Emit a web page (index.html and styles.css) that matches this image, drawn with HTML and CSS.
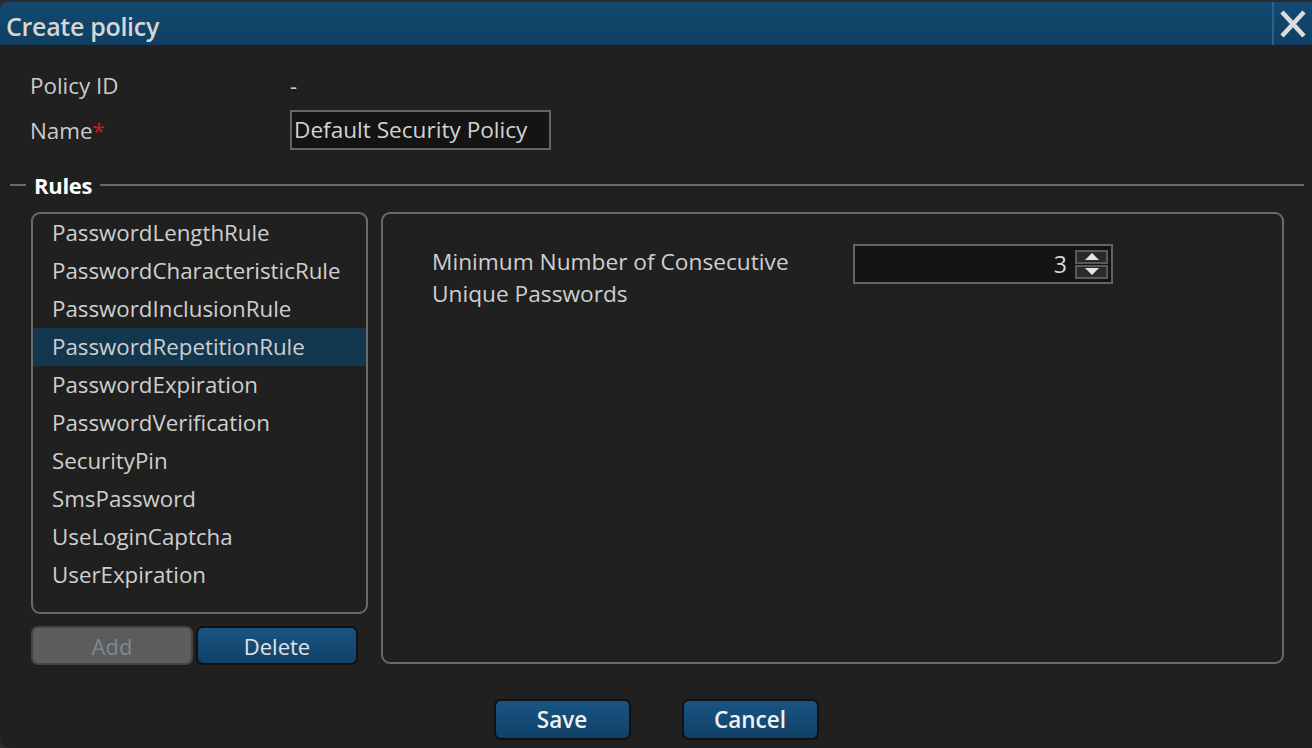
FILE: index.html
```html
<!DOCTYPE html>
<html>
<head>
<meta charset="utf-8">
<link rel="stylesheet" href="styles.css">
</head>
<body>
<div class="dialog">
  <div class="titlebar">
    <div class="title">Create policy</div>
    <div class="close">
      <svg width="28" height="30" viewBox="0 0 28 30"><path d="M3 3 L25 27 M25 3 L3 27" stroke="#dcdcdc" stroke-width="4.6" stroke-linecap="butt"/></svg>
    </div>
  </div>
  <div class="content">
    <div class="fields">
      <div class="field-row">
        <div class="label">Policy ID</div>
        <div class="value">-</div>
      </div>
      <div class="field-row name-row">
        <div class="label">Name<span class="req">*</span></div>
        <div class="textbox">Default Security Policy</div>
      </div>
    </div>
    <div class="legend-row">
      <span class="line short"></span>
      <span class="legend">Rules</span>
      <span class="line long"></span>
    </div>
    <div class="rules">
      <div class="left">
        <div class="list">
          <div class="item">PasswordLengthRule</div>
          <div class="item">PasswordCharacteristicRule</div>
          <div class="item">PasswordInclusionRule</div>
          <div class="item selected">PasswordRepetitionRule</div>
          <div class="item">PasswordExpiration</div>
          <div class="item">PasswordVerification</div>
          <div class="item">SecurityPin</div>
          <div class="item">SmsPassword</div>
          <div class="item">UseLoginCaptcha</div>
          <div class="item">UserExpiration</div>
        </div>
        <div class="list-buttons">
          <div class="btn disabled">Add</div>
          <div class="btn blue">Delete</div>
        </div>
      </div>
      <div class="detail">
        <div class="detail-row">
          <div class="detail-label">Minimum Number of Consecutive<br>Unique Passwords</div>
          <div class="numbox">
            <span class="num">3</span>
            <div class="spin">
              <div class="spin-btn"><svg width="14" height="7" viewBox="0 0 14 7"><path d="M7 0 L14 7 L0 7 Z" fill="#e6e6e6"/></svg></div>
              <div class="spin-btn"><svg width="14" height="7" viewBox="0 0 14 7"><path d="M0 0 L14 0 L7 7 Z" fill="#e6e6e6"/></svg></div>
            </div>
          </div>
        </div>
      </div>
    </div>
    <div class="footer">
      <div class="btn blue big">Save</div>
      <div class="btn blue big">Cancel</div>
    </div>
  </div>
</div>
</body>
</html>
```

FILE: styles.css
```css
html, body {
  margin: 0;
  padding: 0;
  background: #2b2b2b;
}
body {
  width: 1312px;
  height: 748px;
  overflow: hidden;
  font-family: "Open Sans", "Noto Sans", sans-serif;
  color: #cfcfcf;
}
.dialog {
  margin-top: 2px;
  height: 746px;
  background: #202020;
  border-radius: 8px 0 0 10px;
  overflow: hidden;
  display: flex;
  flex-direction: column;
}
.titlebar {
  height: 43px;
  background: linear-gradient(#144a72, #0f3e61);
  display: flex;
  align-items: center;
  justify-content: space-between;
  flex-shrink: 0;
}
.title {
  font-size: 25px;
  font-weight: 600;
  color: #d6d6d6;
  padding-left: 6px;
  padding-top: 4px;
  letter-spacing: -0.3px;
}
.close {
  width: 40px;
  height: 43px;
  border-left: 2px solid #2c6189;
  display: flex;
  align-items: center;
  justify-content: center;
  box-sizing: border-box;
}
.content {
  flex: 1;
  display: flex;
  flex-direction: column;
}
.fields {
  padding: 0 0 0 30px;
  margin-top: 20px;
}
.field-row {
  display: flex;
  align-items: center;
  height: 40px;
}
.name-row {
  margin-top: 5px;
}
.label {
  width: 260px;
  font-size: 22.4px;
  color: #cbcbcb;
}
.req {
  color: #e0141e;
}
.value {
  font-size: 22px;
}
.textbox {
  width: 261px;
  height: 40px;
  box-sizing: border-box;
  border: 2px solid #646464;
  background: #141414;
  font-size: 22.6px;
  color: #d2d2d2;
  padding-left: 2px;
  line-height: 35px;
  white-space: nowrap;
  overflow: hidden;
}
.legend-row {
  display: flex;
  align-items: center;
  margin: 18px 8px 0 10px;
  height: 34px;
}
.line {
  height: 2px;
  background: #6a6a6a;
}
.line.short {
  width: 16px;
}
.line.long {
  flex: 1;
}
.legend {
  font-size: 22px;
  font-weight: 700;
  color: #ffffff;
  padding: 0 8px;
  letter-spacing: -0.3px;
}
.rules {
  display: flex;
  margin: 10px 0 0 31px;
  gap: 13px;
}
.left {
  width: 337px;
  display: flex;
  flex-direction: column;
}
.list {
  height: 402px;
  box-sizing: border-box;
  border: 2px solid #6a6a6a;
  border-radius: 9px;
}
.item {
  height: 38px;
  line-height: 38px;
  font-size: 22.3px;
  padding-left: 19px;
  color: #cfcfcf;
  white-space: nowrap;
}
.item.selected {
  background: #13374f;
}
.list-buttons {
  display: flex;
  gap: 3px;
  margin-top: 12px;
}
.btn {
  width: 162px;
  height: 39px;
  box-sizing: border-box;
  border-radius: 7px;
  display: flex;
  align-items: center;
  justify-content: center;
  font-size: 22px;
}
.btn.disabled {
  background: #5c5c5c;
  border: 2px solid #444;
  color: #7d8894;
}
.btn.blue {
  background: linear-gradient(#1a5482, #0f4168);
  border: 2px solid #111;
  color: #e4e4e4;
}
.detail {
  width: 903px;
  height: 452px;
  box-sizing: border-box;
  border: 2px solid #6a6a6a;
  border-radius: 9px;
}
.detail-row {
  display: flex;
  align-items: flex-start;
  padding: 30px 0 0 49px;
}
.detail-label {
  width: 421px;
  font-size: 22.7px;
  line-height: 32px;
  color: #cfcfcf;
  margin-top: 2px;
  white-space: nowrap;
}
.numbox {
  width: 260px;
  height: 40px;
  box-sizing: border-box;
  border: 2px solid #646464;
  background: #141414;
  display: flex;
  align-items: center;
  justify-content: flex-end;
  padding-right: 3px;
  gap: 8px;
}
.num {
  font-size: 23px;
  color: #d6d6d6;
}
.spin {
  display: flex;
  flex-direction: column;
  gap: 1px;
}
.spin-btn {
  width: 33px;
  height: 14px;
  box-sizing: border-box;
  border: 2px solid #5a5a5a;
  background: #2a2a2a;
  display: flex;
  align-items: center;
  justify-content: center;
}
.footer {
  display: flex;
  justify-content: center;
  gap: 51px;
  margin-top: 34px;
}
.btn.big {
  width: 137px;
  height: 41px;
  font-weight: 600;
  color: #f0f0f0;
  font-size: 22.5px;
}
```
